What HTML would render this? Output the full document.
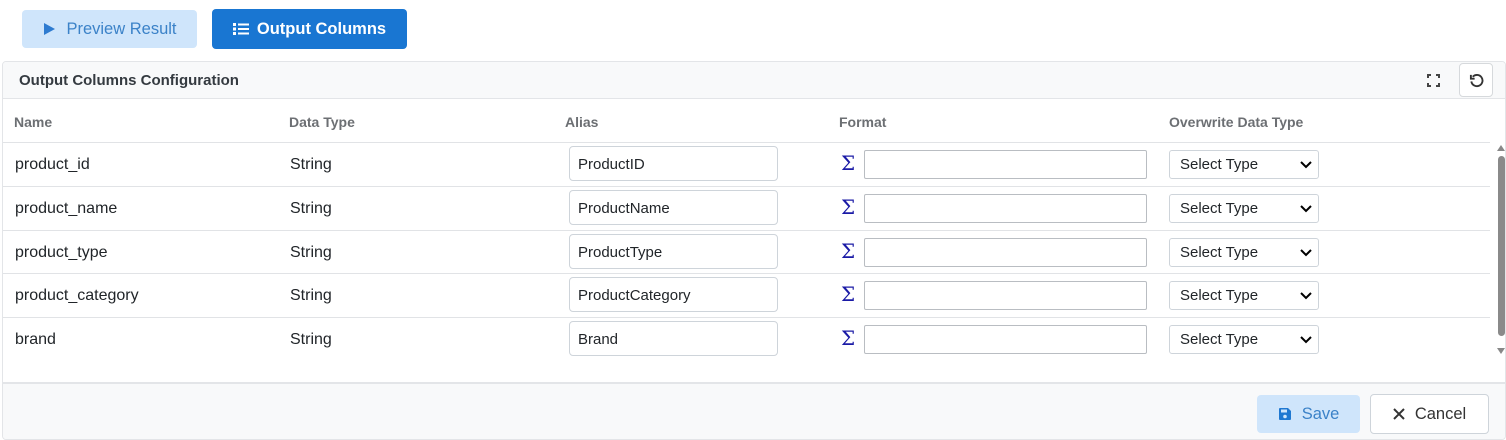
<!DOCTYPE html>
<html><head><style>
*{box-sizing:border-box;margin:0;padding:0}
body{width:1506px;height:440px;background:#fff;font-family:"Liberation Sans",Arial,sans-serif;position:relative;overflow:hidden;color:#212529}
.abs{position:absolute}
.btn{position:absolute;border-radius:4px;display:flex;align-items:center;justify-content:center;font-size:16px}
.panel{position:absolute;left:2px;top:61px;width:1504px;height:379px;border:1px solid #e3e5e8;border-radius:4px;overflow:hidden}
.ph{position:absolute;left:0;top:0;width:100%;height:37px;background:#f8f9fa;border-bottom:1px solid #e3e5e8}
.th{position:absolute;top:52px;font-size:14px;font-weight:bold;color:#6c6f73}
.row{position:absolute;left:0;width:1487px;height:44px;border-top:1px solid #e1e3e6;font-size:16px}
.row span{position:absolute;top:13px}
.alias{position:absolute;left:566px;top:3px;width:209px;height:35px;border:1px solid #ced4da;border-radius:4px;padding:10px 0 0 8px;font-size:15px;line-height:1}
.sig{position:absolute;left:838px;top:10px;color:#1a1aa6;font-size:20px;line-height:1;font-family:"DejaVu Serif",serif}
.fmt{position:absolute;left:861px;top:7px;width:283px;height:29px;border:1px solid #b9bdc2;border-radius:2px}
.sel{position:absolute;left:1166px;top:7px;width:150px;height:29px;border:1px solid #ced4da;border-radius:3px;font-size:15px;padding:5px 0 0 10px}
.sel svg{position:absolute;right:6px;top:10px}
</style></head><body>
<div class="btn" style="left:22px;top:10px;width:175px;height:38px;background:#cfe5fb;color:#3b82c8;font-size:16.5px">
<svg width="14" height="14" viewBox="0 0 14 14" style="margin-right:10px"><path d="M2 1L13 7L2 13Z" fill="#2e7bd0"/></svg>Preview Result</div>
<div class="btn" style="left:212px;top:9px;width:195px;height:40px;background:#1976d2;color:#fff;font-weight:bold;font-size:16.5px">
<svg width="16" height="14" viewBox="0 0 16 14" style="margin-right:8px" fill="#fff"><rect x="0" y="1" width="3" height="3"/><rect x="0" y="5.5" width="3" height="3"/><rect x="0" y="10" width="3" height="3"/><rect x="5" y="1.5" width="11" height="2"/><rect x="5" y="6" width="11" height="2"/><rect x="5" y="10.5" width="11" height="2"/></svg>Output Columns</div>
<div class="panel">
<div class="ph"><div class="abs" style="left:16px;top:10px;font-size:15px;font-weight:bold;color:#343a40">Output Columns Configuration</div>
<svg class="abs" style="left:1424px;top:12px" width="13" height="13" viewBox="0 0 13 13" fill="none" stroke="#444" stroke-width="2"><path d="M1 4V1H4M9 1H12V4M12 9V12H9M4 12H1V9"/></svg>
<div class="abs" style="left:1456px;top:1px;width:34px;height:34px;border:1px solid #d6d9dc;border-radius:4px;background:#fff"><svg class="abs" style="left:9px;top:9px" width="15" height="15" viewBox="0 0 16 16" fill="none" stroke="#333" stroke-width="2"><path d="M4 4A6 6 0 1 1 2.5 9"/><path d="M2 2V6H6" fill="none"/></svg></div></div>
<div class="th" style="left:11px">Name</div><div class="th" style="left:286px">Data Type</div><div class="th" style="left:562px">Alias</div><div class="th" style="left:836px">Format</div><div class="th" style="left:1166px">Overwrite Data Type</div>
<div class="row" style="top:80px"><span style="left:12px">product_id</span><span style="left:287px">String</span><div class="alias">ProductID</div><div class="sig">Σ</div><div class="fmt"></div><div class="sel">Select Type<svg width="12" height="8" viewBox="0 0 12 8"><path d="M1 1L6 6L11 1" stroke="#000" stroke-width="2" fill="none"/></svg></div></div>
<div class="row" style="top:124px"><span style="left:12px">product_name</span><span style="left:287px">String</span><div class="alias">ProductName</div><div class="sig">Σ</div><div class="fmt"></div><div class="sel">Select Type<svg width="12" height="8" viewBox="0 0 12 8"><path d="M1 1L6 6L11 1" stroke="#000" stroke-width="2" fill="none"/></svg></div></div>
<div class="row" style="top:168px"><span style="left:12px">product_type</span><span style="left:287px">String</span><div class="alias">ProductType</div><div class="sig">Σ</div><div class="fmt"></div><div class="sel">Select Type<svg width="12" height="8" viewBox="0 0 12 8"><path d="M1 1L6 6L11 1" stroke="#000" stroke-width="2" fill="none"/></svg></div></div>
<div class="row" style="top:211px"><span style="left:12px">product_category</span><span style="left:287px">String</span><div class="alias">ProductCategory</div><div class="sig">Σ</div><div class="fmt"></div><div class="sel">Select Type<svg width="12" height="8" viewBox="0 0 12 8"><path d="M1 1L6 6L11 1" stroke="#000" stroke-width="2" fill="none"/></svg></div></div>
<div class="row" style="top:255px"><span style="left:12px">brand</span><span style="left:287px">String</span><div class="alias">Brand</div><div class="sig">Σ</div><div class="fmt"></div><div class="sel">Select Type<svg width="12" height="8" viewBox="0 0 12 8"><path d="M1 1L6 6L11 1" stroke="#000" stroke-width="2" fill="none"/></svg></div></div>
<svg class="abs" style="left:1494px;top:83px" width="8" height="6"><path d="M0 6L4 0L8 6Z" fill="#888"/></svg>
<div class="abs" style="left:1495px;top:94px;width:7px;height:180px;background:#8a8a8a;border-radius:4px"></div>
<svg class="abs" style="left:1494px;top:286px" width="8" height="6"><path d="M0 0L4 6L8 0Z" fill="#888"/></svg>
<div class="abs" style="left:0;top:320px;width:100%;height:60px;background:#f8f9fa;border-top:2px solid #e3e5e8"></div>
</div>
<div class="btn" style="left:1257px;top:395px;width:103px;height:38px;background:#cfe5fb;color:#3b82c8;font-size:16.5px">
<svg width="14" height="14" viewBox="0 0 14 14" style="margin-right:10px"><path d="M1 2Q1 1 2 1H10L13 4V12Q13 13 12 13H2Q1 13 1 12Z" fill="#1f78d1"/><rect x="3" y="2.5" width="6" height="3" fill="#cfe5fb"/><circle cx="7" cy="9.5" r="1.8" fill="#cfe5fb"/></svg>Save</div>
<div class="btn" style="left:1370px;top:394px;width:119px;height:40px;background:#fff;border:1px solid #ced4da;color:#333;font-size:16.5px">
<svg width="12" height="12" viewBox="0 0 12 12" style="margin-right:10px"><path d="M1 1L11 11M11 1L1 11" stroke="#333" stroke-width="2"/></svg>Cancel</div>
</body></html>
